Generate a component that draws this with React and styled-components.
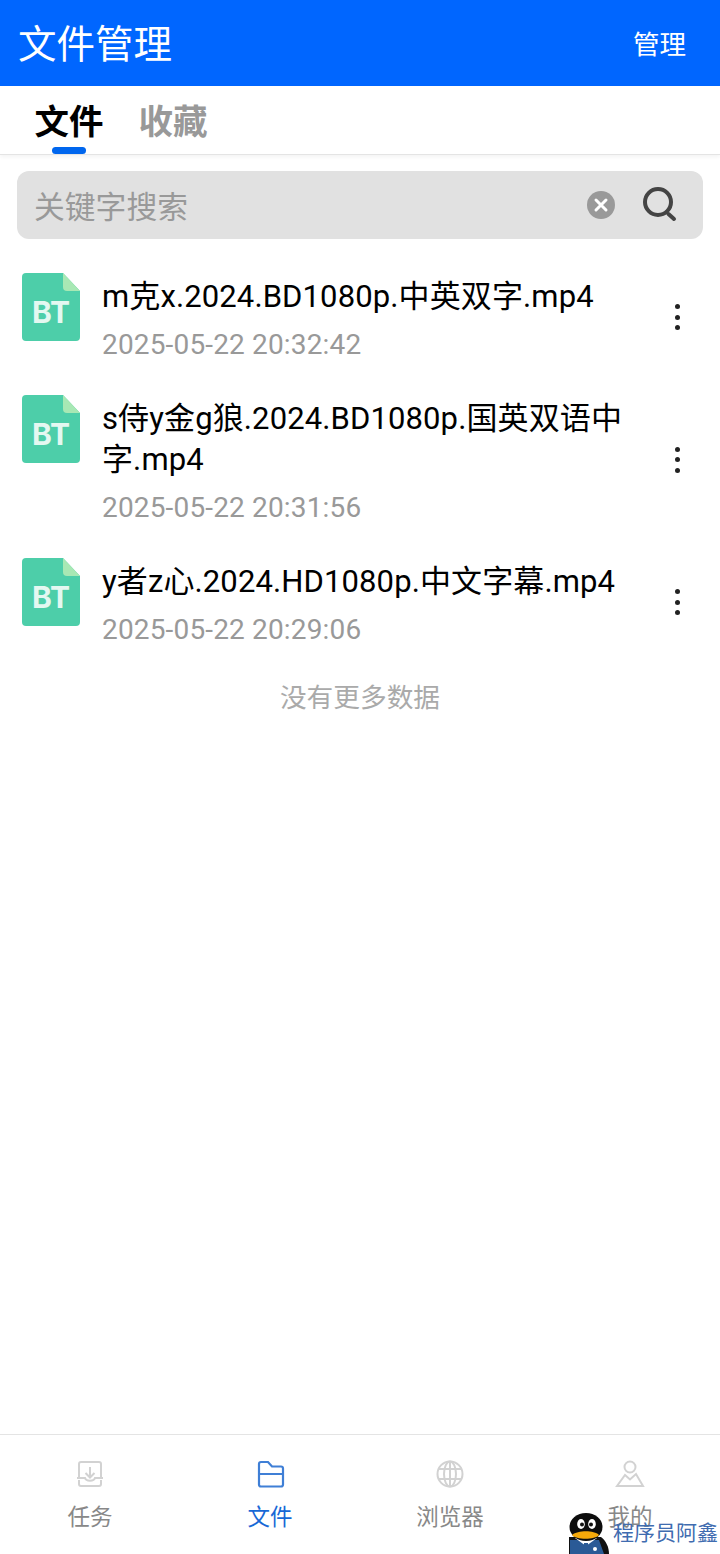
import React from 'react';
import styled, { createGlobalStyle } from 'styled-components';

const GlobalStyle = createGlobalStyle`
    html, body {
        margin: 0;
        padding: 0;
        background: #fff;
    }
    body {
        font-family: 'Noto Sans', 'Noto Sans CJK SC', sans-serif;
    }
`;

const Page = styled.div`
    position: relative;
    width: 720px;
    height: 1554px;
    display: flex;
    flex-direction: column;
    overflow: hidden;
    background: #fff;
`;

const Header = styled.header`
    height: 86px;
    flex: none;
    background: #0066ff;
    color: #fff;
    display: flex;
    align-items: center;
    justify-content: space-between;
    padding: 0 34px 0 18px;
`;

const Title = styled.h1`
    margin: 0;
    font-size: 38.5px;
    font-weight: 400;
    line-height: 85px;
`;

const HeaderAction = styled.span`
    font-size: 26.5px;
    margin-top: -2px;
`;

const Tabs = styled.nav`
    height: 68px;
    flex: none;
    display: flex;
    gap: 34px;
    padding-left: 34.5px;
    border-bottom: 1px solid #e4e4e4;
    box-shadow: 0 2px 4px rgba(0, 0, 0, 0.05);
`;

const Tab = styled.div`
    position: relative;
    width: 70px;
    font-size: 34.5px;
    font-weight: 700;
    line-height: 70px;
    color: ${props => (props.$active ? '#000' : '#999')};
    &::after {
        content: '';
        display: ${props => (props.$active ? 'block' : 'none')};
        position: absolute;
        left: 17.5px;
        bottom: 0;
        width: 34px;
        height: 7px;
        border-radius: 4px;
        background: #0066ee;
    }
`;

const SearchBar = styled.div`
    height: 68px;
    flex: none;
    margin: 16px 17px 0;
    padding: 0 26px 0 17px;
    display: flex;
    align-items: center;
    border-radius: 12px;
    background: #e1e1e1;
`;

const Placeholder = styled.span`
    flex: 1;
    margin-top: -2px;
    font-size: 30.8px;
    color: #999;
`;

const ClearButton = styled.svg`
    width: 28px;
    height: 28px;
    margin-right: 26px;
`;

const SearchIcon = styled.svg`
    width: 36px;
    height: 36px;
`;

const FileList = styled.ul`
    list-style: none;
    margin: 12px 0 0;
    padding: 0;
`;

const FileRow = styled.li`
    display: grid;
    grid-template-columns: 80px 1fr 5px;
    padding: 22px 40px 10px 22px;
`;

const FileIcon = styled.svg`
    width: 58px;
    height: 68px;
    display: block;
`;

const FileBody = styled.div`
    min-width: 0;
    padding-right: 37px;
`;

const FileName = styled.div`
    margin-top: 3px;
    font-family: Roboto, 'Noto Sans CJK SC', sans-serif;
    font-size: 31px;
    letter-spacing: 0.12px;
    line-height: 41px;
    color: #000;
    word-break: break-all;
`;

const FileTime = styled.div`
    margin-top: 10px;
    font-family: Roboto, 'Noto Sans CJK SC', sans-serif;
    font-size: 28px;
    letter-spacing: 0.16px;
    line-height: 36px;
    color: #999;
`;

const MoreDots = styled.div`
    align-self: center;
    display: flex;
    flex-direction: column;
    gap: 5.5px;
    margin-bottom: 2px;
    span {
        width: 5px;
        height: 5px;
        border-radius: 50%;
        background: #222;
    }
`;

const NoMore = styled.div`
    margin-top: 21px;
    text-align: center;
    font-size: 26.7px;
    line-height: 36px;
    color: #aaa;
`;

const TabBar = styled.footer`
    margin-top: auto;
    height: 119px;
    flex: none;
    border-top: 1px solid #e4e4e4;
    display: grid;
    grid-template-columns: repeat(4, 180px);
`;

const TabBarItem = styled.div`
    display: flex;
    flex-direction: column;
    align-items: center;
    padding-top: 23px;
    font-size: 22.5px;
    line-height: 32px;
    color: ${props => (props.$active ? '#1768d6' : '#888')};
`;

const TabBarIcon = styled.svg`
    width: 32px;
    height: 32px;
    margin-bottom: 11px;
    fill: none;
    stroke: ${props => (props.$active ? '#3f7fd6' : '#d2d2d2')};
    stroke-width: 2;
`;

const Watermark = styled.div`
    position: absolute;
    left: 569px;
    bottom: 0;
    display: flex;
    align-items: flex-end;
`;

const Penguin = styled.svg`
    width: 40px;
    height: 41px;
    display: block;
`;

const WatermarkText = styled.span`
    position: absolute;
    left: 44px;
    bottom: 10px;
    font-size: 21px;
    line-height: 24px;
    white-space: nowrap;
    color: #3f6cb0;
`;

const files = [
    { name: 'm克x.2024.BD1080p.中英双字.mp4', time: '2025-05-22 20:32:42' },
    { name: 's侍y金g狼.2024.BD1080p.国英双语中字.mp4', time: '2025-05-22 20:31:56' },
    { name: 'y者z心.2024.HD1080p.中文字幕.mp4', time: '2025-05-22 20:29:06' },
];

const BtIcon = () => (
    <FileIcon viewBox="0 0 58 68">
        <path d="M4 0H41L58 18V64a4 4 0 0 1-4 4H4a4 4 0 0 1-4-4V4a4 4 0 0 1 4-4Z" fill="#4dcea9" />
        <path d="M41 0L58 18H45a4 4 0 0 1-4-4Z" fill="#a8e8b4" />
        <text x="29" y="50" textAnchor="middle" fontSize="30" fontWeight="700" fill="#e4f8f1" fontFamily="Inter, sans-serif">BT</text>
    </FileIcon>
);

const App = () => {
    return (
        <Page>
            <GlobalStyle />
            <Header>
                <Title>文件管理</Title>
                <HeaderAction>管理</HeaderAction>
            </Header>
            <Tabs>
                <Tab $active>文件</Tab>
                <Tab>收藏</Tab>
            </Tabs>
            <SearchBar>
                <Placeholder>关键字搜索</Placeholder>
                <ClearButton viewBox="0 0 28 28">
                    <circle cx="14" cy="14" r="14" fill="#999" />
                    <path d="M9 9L19 19M19 9L9 19" stroke="#fff" strokeWidth="3" strokeLinecap="round" />
                </ClearButton>
                <SearchIcon viewBox="0 0 36 36">
                    <circle cx="17" cy="15" r="13" fill="none" stroke="#444" strokeWidth="4" />
                    <path d="M27.5 27L33 32" stroke="#444" strokeWidth="4" strokeLinecap="round" />
                </SearchIcon>
            </SearchBar>
            <FileList>
                {files.map(file => (
                    <FileRow key={file.name}>
                        <BtIcon />
                        <FileBody>
                            <FileName>{file.name}</FileName>
                            <FileTime>{file.time}</FileTime>
                        </FileBody>
                        <MoreDots>
                            <span />
                            <span />
                            <span />
                        </MoreDots>
                    </FileRow>
                ))}
            </FileList>
            <NoMore>没有更多数据</NoMore>
            <TabBar>
                <TabBarItem>
                    <TabBarIcon viewBox="0 0 32 32">
                        <path d="M5 19V6a2 2 0 0 1 2-2h18a2 2 0 0 1 2 2v13M5 22v4a2 2 0 0 0 2 2h18a2 2 0 0 0 2-2v-4" />
                        <path d="M3 20h8c1 3.5 9 3.5 10 0h8M16 9v11M11.5 15l4.5 4.5 4.5-4.5" />
                    </TabBarIcon>
                    任务
                </TabBarItem>
                <TabBarItem $active>
                    <TabBarIcon $active viewBox="0 0 32 32">
                        <path d="M5 16V6a2 2 0 0 1 2-2h7l4 4.500h9a2 2 0 0 1 2 2V16M5 16h24v10.500a2 2 0 0 1-2 2H7a2 2 0 0 1-2-2Z" strokeWidth="2.2" />
                    </TabBarIcon>
                    文件
                </TabBarItem>
                <TabBarItem>
                    <TabBarIcon viewBox="0 0 32 32" strokeWidth="2.2">
                        <circle cx="16" cy="16" r="12.500" />
                        <ellipse cx="16" cy="16" rx="6" ry="12.500" />
                        <path d="M5 11h22M5 21h22M16 3.500v25" />
                    </TabBarIcon>
                    浏览器
                </TabBarItem>
                <TabBarItem>
                    <TabBarIcon viewBox="0 0 32 32">
                        <circle cx="16" cy="9" r="5.500" />
                        <path d="M3 28L11 17l5 4.500L22 16l7 12Z" />
                    </TabBarIcon>
                    我的
                </TabBarItem>
            </TabBar>
            <Watermark>
                <Penguin viewBox="0 0 40 41">
                    <path d="M0 41V24h32c5 4 8 10 8 17Z" fill="#111" />
                    <path d="M1 41V27h29l5 14Z" fill="#2a5a96" />
                    <path d="M6 25l11 8 11-8-11-2Z" fill="#fff" />
                    <path d="M15 30h4l1 11h-6Z" fill="#2a5a96" />
                    <ellipse cx="17" cy="14" rx="16.500" ry="14" fill="#0d0d0d" />
                    <ellipse cx="12" cy="11" rx="3.800" ry="5" fill="#fff" />
                    <ellipse cx="23" cy="11" rx="3.800" ry="5" fill="#fff" />
                    <circle cx="13" cy="11.500" r="2" fill="#111" />
                    <circle cx="22" cy="11.500" r="2" fill="#111" />
                    <path d="M3 22c6-5 22-5 27 0-4 5-23 5-27 0Z" fill="#f5a90a" />
                    <circle cx="26" cy="36" r="2" fill="#fff" />
                </Penguin>
                <WatermarkText>程序员阿鑫</WatermarkText>
            </Watermark>
        </Page>
    );
};

export default App;
